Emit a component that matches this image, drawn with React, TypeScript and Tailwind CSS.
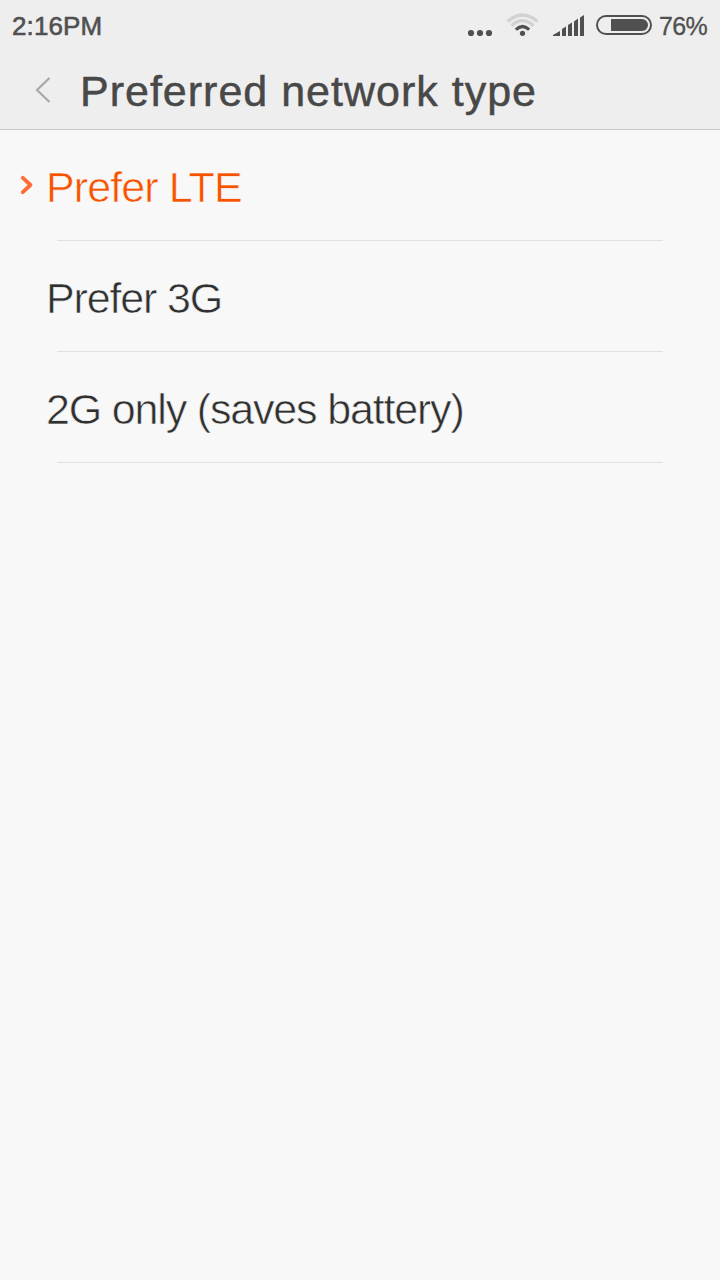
import { useState } from 'react';

const options = [
  { id: 'lte', label: 'Prefer LTE', spacing: 'tracking-[-0.9px]' },
  { id: '3g', label: 'Prefer 3G', spacing: 'tracking-[-1.15px]' },
  { id: '2g', label: '2G only (saves battery)', spacing: 'tracking-[-1.17px]' },
];

function StatusBar() {
  return (
    <div className="flex h-[52px] items-center pl-3 pr-3 text-[#505050]">
      <span className="text-[26px] leading-[52px] tracking-[0.1px] [-webkit-text-stroke:0.6px_#505050]">
        2:16PM
      </span>
      <svg className="mb-0.5 ml-auto shrink-0" width="184" height="40" viewBox="467 5 184 40" overflow="visible">
        <g fill="#505050">
          <circle cx="471" cy="33" r="3.1" />
          <circle cx="480" cy="33" r="3.1" />
          <circle cx="489" cy="33" r="3.1" />
          <circle cx="522.5" cy="33.3" r="2.6" />
          <path d="M553 36V35L560 31V36Z" />
          <path d="M562 36V29L566 26.5V36Z" />
          <path d="M568 36V25L572 22.5V36Z" />
          <path d="M574 36V21.5L578 18.5V36Z" />
          <path d="M580 36V17.5L584 15V36Z" />
          <path d="M611 19H642A6 6 0 0 1 642 31H611Z" />
        </g>
        <g fill="none" strokeWidth="3.2">
          <path d="M507.5 21.5Q522.5 8.5 537.5 21.5" stroke="#d2d2d2" />
          <path d="M511.5 25.7Q522.5 15.7 533.5 25.7" stroke="#d2d2d2" />
          <path d="M515.8 29.6Q522.5 23.4 529.2 29.6" stroke="#505050" />
        </g>
        <rect x="597" y="16" width="54" height="18" rx="9" fill="none" stroke="#505050" strokeWidth="2" />
      </svg>
      <span className="ml-2 w-[49px] text-[25px] leading-[52px] tracking-[-0.6px] [-webkit-text-stroke:0.3px_#505050]">
        76%
      </span>
    </div>
  );
}

export default function App() {
  const [selected, setSelected] = useState('lte');

  return (
    <main className="min-h-screen bg-[#f8f8f8] font-['Liberation_Sans',Arial,sans-serif]">
      <header className="h-[130px] border-b border-[#c8c8c8] bg-[#eee]">
        <StatusBar />
        <div className="flex h-[77px] items-center pl-[35px]">
          <button aria-label="Back" className="mr-[29px] mb-[2px]">
            <svg width="16" height="28" viewBox="0 0 16 28" fill="none" stroke="#a8a8a8" strokeWidth="2.2">
              <path d="M14.5 2L2 14L14.5 26" />
            </svg>
          </button>
          <h1 className="pt-0.5 text-[43px] leading-[77px] tracking-[1px] text-[#484848] [-webkit-text-stroke:0.5px_#484848]">
            Preferred network type
          </h1>
        </div>
      </header>

      <ul>
        {options.map((option) => {
          const active = option.id === selected;
          return (
            <li key={option.id}>
              <button
                onClick={() => setSelected(option.id)}
                className="flex h-[110px] w-full items-center pl-5 text-left"
              >
                <span className="flex w-[26px] shrink-0">
                  {active && (
                    <svg
                      width="14"
                      height="20"
                      viewBox="0 0 14 20"
                      fill="none"
                      stroke="#ff6c35"
                      strokeWidth="3.8"
                      strokeLinecap="round"
                      strokeLinejoin="round"
                    >
                      <path d="M2.8 2.8L10.5 10L2.8 17.2" />
                    </svg>
                  )}
                </span>
                <span
                  className={`pt-[5px] text-[43px] leading-[105px] [-webkit-text-stroke:0.6px_#f8f8f8] ${option.spacing} ${
                    active ? 'text-[#f65200]' : 'text-[#303030]'
                  }`}
                >
                  {option.label}
                </span>
              </button>
              <div className="mx-[57px] h-px bg-[#e0e0e0]" />
            </li>
          );
        })}
      </ul>
    </main>
  );
}
